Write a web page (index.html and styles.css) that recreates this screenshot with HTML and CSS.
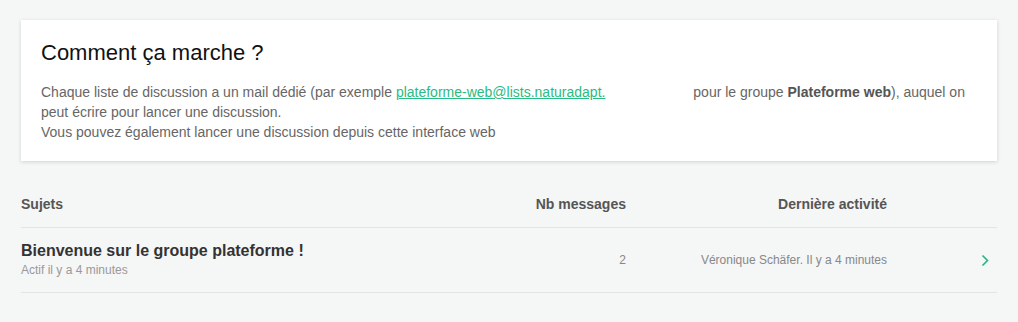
FILE: index.html
```html
<!DOCTYPE html>
<html lang="fr">
<head>
    <meta charset="UTF-8">
    <meta name="viewport" content="width=device-width, initial-scale=1.0">
    <title>Discussions - Plateforme web</title>
    <link rel="stylesheet" href="styles.css">
</head>
<body>
    <div class="container">
        <section class="help-card">
            <h2>Comment ça marche ?</h2>
            <p>
                Chaque liste de discussion a un mail dédié (par exemple <a class="mail" href="#">plateforme-web@lists.naturadapt.</a> pour le groupe <strong>Plateforme web</strong>), auquel on peut écrire pour lancer une discussion.<br>
                Vous pouvez également lancer une discussion depuis cette interface web
            </p>
        </section>

        <div class="discussions">
            <div class="row head">
                <div class="col-subject">Sujets</div>
                <div class="col-count">Nb messages</div>
                <div class="col-activity">Dernière activité</div>
                <div class="col-link"></div>
            </div>
            <a class="row item" href="#">
                <div class="col-subject">
                    <div class="title">Bienvenue sur le groupe plateforme !</div>
                    <div class="meta">Actif il y a 4 minutes</div>
                </div>
                <div class="col-count">2</div>
                <div class="col-activity">Véronique Schäfer. Il y a 4 minutes</div>
                <div class="col-link">
                    <svg width="8" height="13" viewBox="0 0 8 13"><path d="M1.5 1.5 L6.5 6.5 L1.5 11.5" fill="none" stroke="#27b57c" stroke-width="1.6"/></svg>
                </div>
            </a>
        </div>
    </div>
</body>
</html>
```

FILE: styles.css
```css
:root {
    --green: #2abb80;
    --text: #333;
    --muted: #666;
    --light-muted: #999;
    --bg: #f5f6f6;
    --line: #e2e5e6;
}

* {
    margin: 0;
    padding: 0;
    box-sizing: border-box;
    font-family: 'Liberation Sans', Arial, sans-serif;
}

body {
    background: var(--bg);
    color: var(--text);
}

.container {
    padding: 20px 21px;
}

.help-card {
    background: white;
    padding: 20px 20px 19px;
    box-shadow: 0 1px 4px rgba(0, 0, 0, 0.15);
}

.help-card h2 {
    font-size: 22px;
    font-weight: 400;
    line-height: 26px;
    color: #111;
    margin-bottom: 16px;
}

.help-card p {
    font-size: 14px;
    line-height: 20px;
    color: var(--muted);
}

.help-card strong {
    color: #555;
}

.mail {
    color: var(--green);
    margin-right: 84px;
}

.discussions {
    margin-top: 20px;
}

.row {
    display: grid;
    grid-template-columns: 1fr 150px 261px 110px;
    align-items: center;
    border-bottom: 1px solid var(--line);
}

.row.head {
    padding: 15px 0;
    font-size: 14px;
    font-weight: 700;
    line-height: 16px;
    color: #555;
}

.row.item {
    padding: 13px 0;
    text-decoration: none;
    color: var(--text);
}

.col-count,
.col-activity {
    text-align: right;
}

.col-link {
    display: flex;
    justify-content: flex-end;
    padding-right: 8px;
}

.title {
    font-size: 16px;
    font-weight: 700;
    line-height: 20px;
}

.meta {
    font-size: 12px;
    line-height: 18px;
    color: var(--light-muted);
}

.item .col-count,
.item .col-activity {
    font-size: 12px;
    color: #888;
}
```
